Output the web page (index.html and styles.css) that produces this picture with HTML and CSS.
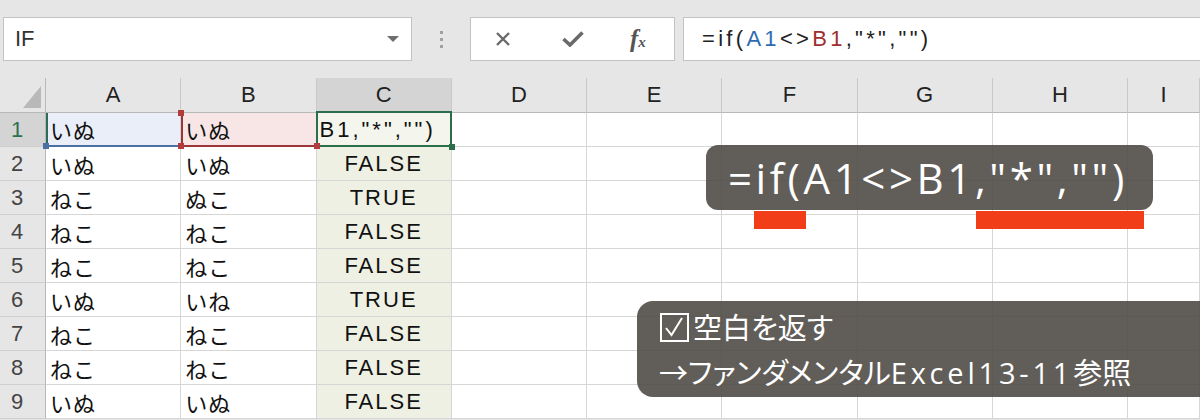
FILE: index.html
```html
<!DOCTYPE html>
<html lang="ja">
<head>
<meta charset="UTF-8">
<meta name="viewport" content="width=device-width, initial-scale=1.0">
<title>IF 空白を返す</title>
<link rel="stylesheet" href="styles.css">
</head>
<body>

<div class="toolbar">
    <div class="name-box">
        <span>IF</span>
        <span class="drop"></span>
    </div>
    <div class="grip"><i></i><i></i><i></i></div>
    <div class="fx-buttons">
        <svg class="icon-x" width="14" height="14" viewBox="0 0 14 14"><path d="M1 1L13 13M13 1L1 13" stroke="#6a6a6a" stroke-width="2.4" fill="none"/></svg>
        <svg class="icon-ok" width="22" height="16" viewBox="0 0 22 16"><path d="M1.5 8L8 14L20.5 1.5" stroke="#6a6a6a" stroke-width="3.6" fill="none"/></svg>
        <span class="fx">f<sub>x</sub></span>
    </div>
    <div class="formula">=if(<span class="ref-a">A1</span>&lt;&gt;<span class="ref-b">B1</span>,"*","")</div>
</div>

<div class="sheet">
    <div class="row head">
        <div class="corner"><svg width="18" height="22" viewBox="0 0 18 22"><polygon points="18,0 18,22 0,22" fill="#b9b9b9"/></svg></div>
        <div class="hc">A</div><div class="hc">B</div><div class="hc sel">C</div><div class="hc">D</div>
        <div class="hc">E</div><div class="hc">F</div><div class="hc">G</div><div class="hc">H</div><div class="hc">I</div>
    </div>
    <div class="row">
        <div class="rh sel">1</div>
        <div class="cell a1">いぬ<i class="handle blue hbl"></i></div>
        <div class="cell b1">いぬ<i class="handle red htl"></i><i class="handle red hbl"></i><i class="handle red hbr"></i></div>
        <div class="cell c1">B1,"*","")<i class="handle green hbr"></i></div>
        <div class="cell"></div><div class="cell"></div><div class="cell"></div><div class="cell"></div><div class="cell"></div><div class="cell"></div>
    </div>
    <div class="row">
        <div class="rh">2</div><div class="cell">いぬ</div><div class="cell">いぬ</div><div class="cell val">FALSE</div>
        <div class="cell"></div><div class="cell"></div><div class="cell"></div><div class="cell"></div><div class="cell"></div><div class="cell"></div>
    </div>
    <div class="row">
        <div class="rh">3</div><div class="cell">ねこ</div><div class="cell">ぬこ</div><div class="cell val">TRUE</div>
        <div class="cell"></div><div class="cell"></div><div class="cell"></div><div class="cell"></div><div class="cell"></div><div class="cell"></div>
    </div>
    <div class="row">
        <div class="rh">4</div><div class="cell">ねこ</div><div class="cell">ねこ</div><div class="cell val">FALSE</div>
        <div class="cell"></div><div class="cell"></div><div class="cell"></div><div class="cell"></div><div class="cell"></div><div class="cell"></div>
    </div>
    <div class="row">
        <div class="rh">5</div><div class="cell">ねこ</div><div class="cell">ねこ</div><div class="cell val">FALSE</div>
        <div class="cell"></div><div class="cell"></div><div class="cell"></div><div class="cell"></div><div class="cell"></div><div class="cell"></div>
    </div>
    <div class="row">
        <div class="rh">6</div><div class="cell">いぬ</div><div class="cell">いね</div><div class="cell val">TRUE</div>
        <div class="cell"></div><div class="cell"></div><div class="cell"></div><div class="cell"></div><div class="cell"></div><div class="cell"></div>
    </div>
    <div class="row">
        <div class="rh">7</div><div class="cell">ねこ</div><div class="cell">ねこ</div><div class="cell val">FALSE</div>
        <div class="cell"></div><div class="cell"></div><div class="cell"></div><div class="cell"></div><div class="cell"></div><div class="cell"></div>
    </div>
    <div class="row">
        <div class="rh">8</div><div class="cell">ねこ</div><div class="cell">ねこ</div><div class="cell val">FALSE</div>
        <div class="cell"></div><div class="cell"></div><div class="cell"></div><div class="cell"></div><div class="cell"></div><div class="cell"></div>
    </div>
    <div class="row">
        <div class="rh">9</div><div class="cell">いぬ</div><div class="cell">いぬ</div><div class="cell val">FALSE</div>
        <div class="cell"></div><div class="cell"></div><div class="cell"></div><div class="cell"></div><div class="cell"></div><div class="cell"></div>
    </div>
</div>

<div class="callout formula-note">=if(A1&lt;&gt;B1,"*","")</div>
<div class="mark mark-a"></div>
<div class="mark mark-b"></div>

<div class="callout ref-note">
    <div class="line"><svg class="checkbox" width="29" height="29" viewBox="0 0 29 29"><rect x="1" y="1" width="27" height="27" fill="none" stroke="#fff" stroke-width="2"/><path d="M6 15L11.5 22L22 5" fill="none" stroke="#fff" stroke-width="2"/></svg>空白を返す</div>
    <div class="line">→ファンダメンタル<span class="en">Excel13-11</span>参照</div>
</div>

</body>
</html>
```

FILE: styles.css
```css
body {
    margin: 0;
    width: 1200px;
    height: 420px;
    overflow: hidden;
    position: relative;
    background-color: #e6e6e6;
    font-family: "Liberation Sans", "Noto Sans CJK JP", sans-serif;
    color: #111;
}

/* formula bar */
.toolbar {
    height: 78px;
    box-sizing: border-box;
    padding: 17px 0 0 3px;
    display: flex;
    align-items: flex-start;
}
.name-box {
    width: 409px;
    height: 44px;
    box-sizing: border-box;
    background-color: #fff;
    border: 1px solid #c3c3c3;
    display: flex;
    align-items: center;
    padding-left: 11px;
    font-size: 22px;
    color: #333;
}
.drop {
    margin-left: auto;
    margin-right: 12px;
    border-left: 6px solid transparent;
    border-right: 6px solid transparent;
    border-top: 6px solid #6e6e6e;
}
.grip {
    width: 58px;
    height: 44px;
    display: flex;
    flex-direction: column;
    align-items: center;
    justify-content: center;
    gap: 4px;
}
.grip i {
    width: 3px;
    height: 3px;
    background-color: #a0a0a0;
}
.fx-buttons {
    width: 205px;
    height: 44px;
    box-sizing: border-box;
    background-color: #fff;
    border: 1px solid #c3c3c3;
    display: flex;
    align-items: center;
    padding-left: 25px;
}
.icon-ok {
    margin-left: 52px;
}
.fx {
    margin-left: 46px;
    font-family: "Liberation Serif", serif;
    font-style: italic;
    font-weight: bold;
    font-size: 25px;
    color: #555;
}
.fx sub {
    font-size: 15px;
    vertical-align: 0;
}
.formula {
    flex: 1;
    margin-left: 8px;
    height: 44px;
    box-sizing: border-box;
    background-color: #fff;
    border: 1px solid #c3c3c3;
    border-right: none;
    display: flex;
    align-items: center;
    padding-left: 18px;
    font-size: 22px;
    letter-spacing: 3.3px;
    color: #222;
    white-space: pre;
}
.ref-a {
    color: #2f6bb0;
}
.ref-b {
    color: #9e3030;
}

/* grid */
.row {
    display: grid;
    grid-template-columns: 46px repeat(8, 135.25px) 1fr;
    height: 34px;
}
.row.head {
    height: 35px;
}
.corner {
    background-color: #e6e6e6;
    border-right: 1px solid #b8b8b8;
    border-bottom: 1px solid #b8b8b8;
    display: flex;
    align-items: flex-end;
    justify-content: flex-end;
    padding: 0 4px 4px 0;
}
.hc {
    background-color: #e6e6e6;
    border-right: 1px solid #c9c9c9;
    border-bottom: 1px solid #b8b8b8;
    display: flex;
    align-items: center;
    justify-content: center;
    font-size: 22px;
    color: #222;
}
.hc.sel {
    background-color: #d4d4d4;
}
.rh {
    background-color: #e6e6e6;
    border-right: 1px solid #b8b8b8;
    border-bottom: 1px solid #cfcfcf;
    display: flex;
    align-items: center;
    padding-left: 11px;
    font-size: 22px;
    color: #444;
}
.rh.sel {
    background-color: #d4d4d4;
    color: #2c7350;
}
.cell {
    position: relative;
    background-color: #fff;
    border-right: 1px solid #d6d6d6;
    border-bottom: 1px solid #d6d6d6;
    display: flex;
    align-items: center;
    padding-left: 4px;
    min-width: 0;
    font-size: 22px;
    letter-spacing: 1px;
    white-space: nowrap;
}
.cell.val {
    background-color: #edf0e3;
    justify-content: center;
    padding-left: 0;
    letter-spacing: 2px;
}
.a1 {
    background-color: #e9eef8;
    border-bottom: 2px solid #4a6fa5;
    box-shadow: inset 2px 0 0 #2f6a5a;
}
.b1 {
    background-color: #f8e5e5;
    border-bottom: 2px solid #9a3636;
    box-shadow: inset 2px 0 0 #9a3636;
}
.c1 {
    background-color: #f4f6ee;
    padding-left: 3px;
    letter-spacing: 3px;
}
.c1::after {
    content: "";
    position: absolute;
    top: -2px;
    left: -1px;
    right: -1px;
    bottom: -1px;
    border: 2px solid #2a6e4c;
}
.handle {
    position: absolute;
    width: 6px;
    height: 6px;
    z-index: 2;
}
.handle.blue { background-color: #4a6fa5; }
.handle.red { background-color: #b23c3c; }
.handle.green { background-color: #2a6e4c; }
.htl { top: -3px; left: -3px; }
.hbl { bottom: -4px; left: -3px; }
.hbr { bottom: -4px; right: -4px; }

/* notes over the sheet */
.callout {
    position: absolute;
    background-color: rgba(78, 73, 69, 0.89);
    color: #fff;
}
.formula-note {
    left: 706px;
    top: 145px;
    width: 447px;
    height: 65px;
    box-sizing: border-box;
    border-radius: 12px;
    display: flex;
    align-items: center;
    padding-left: 22px;
    font-family: "Open Sans", sans-serif;
    font-size: 42px;
    letter-spacing: 3.6px;
    white-space: pre;
}
.mark {
    position: absolute;
    top: 211px;
    height: 18px;
    background-color: #f23e18;
}
.mark-a {
    left: 754px;
    width: 52px;
}
.mark-b {
    left: 976px;
    width: 168px;
}
.ref-note {
    left: 637px;
    top: 301px;
    right: -30px;
    height: 96px;
    box-sizing: border-box;
    border-radius: 16px;
    padding: 4px 0 0 22px;
    font-family: "Open Sans", "Noto Sans CJK JP", "DejaVu Sans", sans-serif;
    font-size: 29px;
    line-height: 45px;
    font-feature-settings: "palt";
    white-space: nowrap;
}
.ref-note .line {
    display: flex;
    align-items: center;
    height: 45px;
}
.checkbox {
    margin: 0 4px 0 1px;
}
.ref-note .en {
    letter-spacing: 3.8px;
}
```
